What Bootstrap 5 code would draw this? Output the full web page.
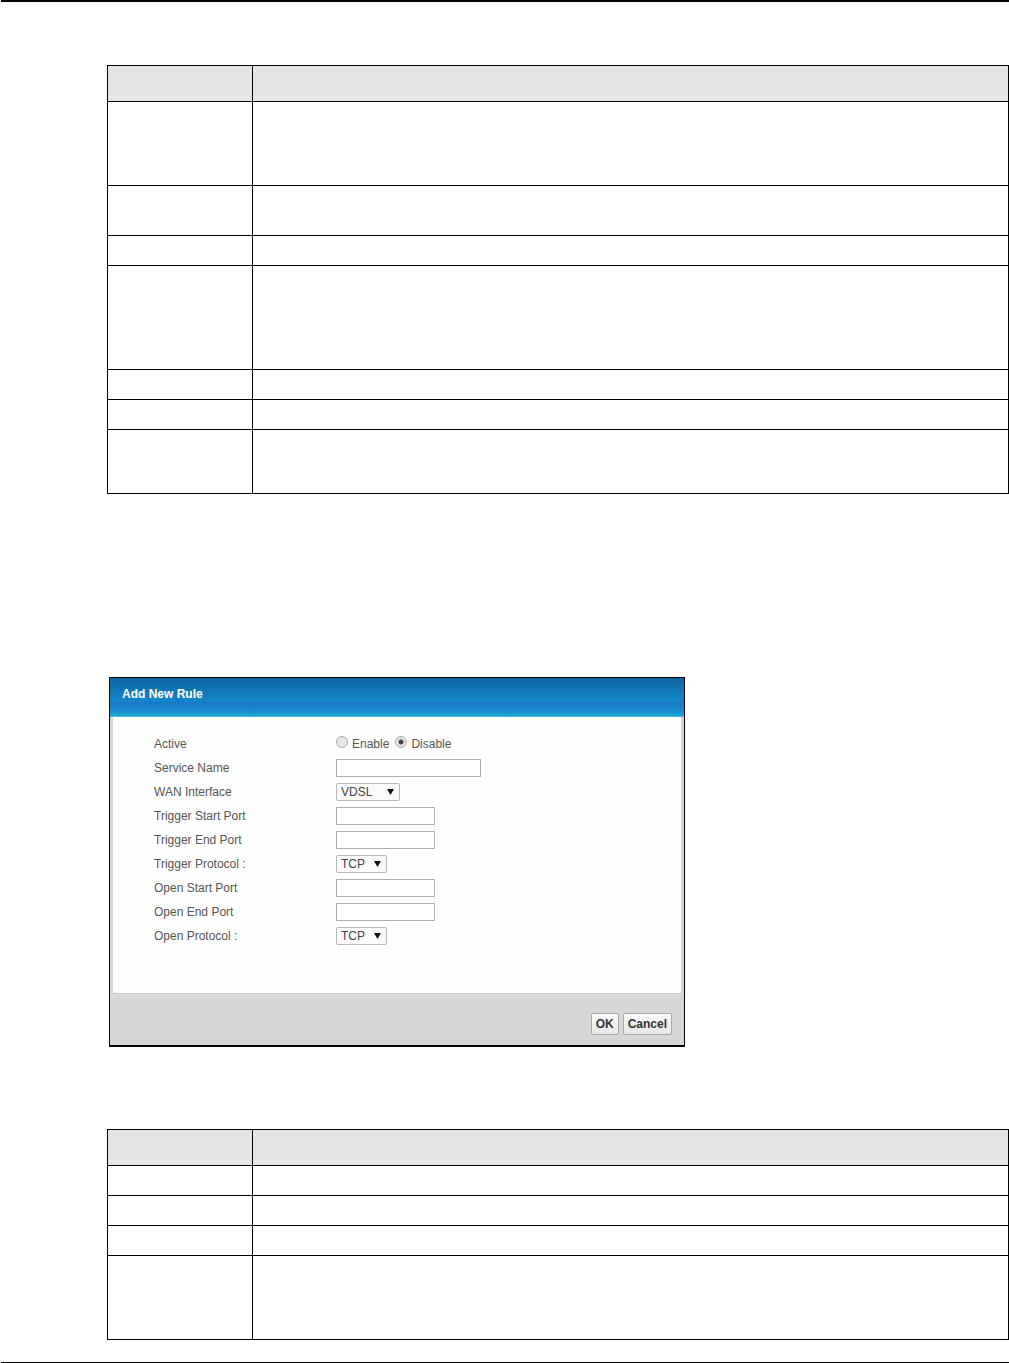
<!DOCTYPE html>
<html lang="en">
<head>
<meta charset="utf-8">
<meta name="viewport" content="width=device-width, initial-scale=1">
<title>Add New Rule</title>
<link href="https://cdn.jsdelivr.net/npm/bootstrap@5.3.0/dist/css/bootstrap.min.css" rel="stylesheet">
<style>
body { background: #fff; font-family: "Liberation Sans", Arial, sans-serif; font-size: 12px; line-height: 18px; color: #555; }
.sheet { border-top: 2px solid #000; border-bottom: 1px solid #000; padding: 63px 0 22px 106px; margin-left: 1px; }
.grid-table { width: 100%; table-layout: fixed; border-collapse: separate; border-spacing: 0; border-top: 1px solid #000; border-left: 1px solid #000; }
.grid-table th, .grid-table td { border-right: 1px solid #000; border-bottom: 1px solid #000; padding: 0; height: 30px; }
.grid-table th { background: #e5e5e5; height: 36px; }
.col-name { width: 145px; }
.grid-table .h-two td { height: 50px; }
.grid-table .h-three td { height: 64px; }
.grid-table .h-four td { height: 84px; }
.grid-table .h-five td { height: 104px; }
.rule-dialog { max-width: 576px; margin: 183px 0 82px 2px; border: 1px solid #000; border-bottom-width: 2px; background: #d6d6d6; }
.rule-head { height: 39px; padding: 0 12px; color: #fff; background: linear-gradient(#0f639e 0, #1287cb 23px, #1a78c8 24px, #1886ce 31px, #1ba6d8 38px, #7cc9e0 39px); }
.rule-head h1 { font-size: 12px; line-height: 33px; font-weight: 700; margin: 0; }
.rule-body { margin: 0 3px; padding: 15px 40px 45px 41px; background: #fefefe; border-bottom: 1px solid #ccc; }
.rule-row { height: 24px; }
.rule-row > .row-title { width: 182px; flex-shrink: 0; }
.rule-row .form-control { width: 99px; height: 18px; min-height: 0; padding: 0 4px; border: 1px solid #b0b0b0; border-radius: 0; font-size: 12px; line-height: 16px; }
.rule-row .form-control.name-box { width: 145px; }
.rule-row select { height: 18px; width: 51px; padding: 0 4px; border: 1px solid #b8b8b8; border-radius: 2px; background: #fafafa; color: #444; font-size: 12px; line-height: 16px; appearance: none; }
.rule-row .wan-box select { width: 64px; }
.pick { position: relative; }
.pick svg { position: absolute; right: 6px; top: 6px; pointer-events: none; }
.dot { appearance: none; flex-shrink: 0; width: 12px; height: 12px; margin: 0 4px 4px 0; border: 1px solid #aaa; border-radius: 50%; background: #e8e8e8; }
.dot:checked { background: radial-gradient(circle, #444 0, #444 2px, #e4e4e4 3px); }
.dot-next { margin-left: 6px; }
.rule-foot { height: 51px; padding: 15px 12px 0; border-top: 4px solid #dadada; }
.rule-foot .btn { height: 22px; padding: 0 4px; border: 1px solid #aaa; border-radius: 2px; background: linear-gradient(#fafafa, #e6e6e6); color: #333; font-size: 12px; line-height: 20px; font-weight: 700; }
</style>
<script src="https://cdn.jsdelivr.net/npm/bootstrap@5.3.0/dist/js/bootstrap.bundle.min.js"></script>
</head>
<body>
<main class="sheet">
  <table class="grid-table">
    <colgroup><col class="col-name"><col></colgroup>
    <thead><tr><th></th><th></th></tr></thead>
    <tbody>
      <tr class="h-four"><td></td><td></td></tr>
      <tr class="h-two"><td></td><td></td></tr>
      <tr><td></td><td></td></tr>
      <tr class="h-five"><td></td><td></td></tr>
      <tr><td></td><td></td></tr>
      <tr><td></td><td></td></tr>
      <tr class="h-three"><td></td><td></td></tr>
    </tbody>
  </table>

  <form class="rule-dialog">
    <header class="rule-head"><h1>Add New Rule</h1></header>
    <div class="rule-body">
      <div class="rule-row d-flex align-items-center">
        <span class="row-title">Active</span>
        <input class="dot" type="radio" name="active" id="on"><label for="on">Enable</label>
        <input class="dot dot-next" type="radio" name="active" id="off" checked><label for="off">Disable</label>
      </div>
      <div class="rule-row d-flex align-items-center"><label class="row-title" for="service">Service Name</label><input class="form-control name-box" type="text" id="service"></div>
      <div class="rule-row d-flex align-items-center"><label class="row-title" for="wan">WAN Interface</label>
        <div class="pick wan-box d-flex"><select id="wan"><option>VDSL</option></select><svg width="7" height="6" viewBox="0 0 7 6"><path d="M0 0h7L3.500 6z" fill="#111"/></svg></div></div>
      <div class="rule-row d-flex align-items-center"><label class="row-title" for="tstart">Trigger Start Port</label><input class="form-control" type="text" id="tstart"></div>
      <div class="rule-row d-flex align-items-center"><label class="row-title" for="tend">Trigger End Port</label><input class="form-control" type="text" id="tend"></div>
      <div class="rule-row d-flex align-items-center"><label class="row-title" for="tproto">Trigger Protocol :</label>
        <div class="pick d-flex"><select id="tproto"><option>TCP</option></select><svg width="7" height="6" viewBox="0 0 7 6"><path d="M0 0h7L3.500 6z" fill="#111"/></svg></div></div>
      <div class="rule-row d-flex align-items-center"><label class="row-title" for="ostart">Open Start Port</label><input class="form-control" type="text" id="ostart"></div>
      <div class="rule-row d-flex align-items-center"><label class="row-title" for="oend">Open End Port</label><input class="form-control" type="text" id="oend"></div>
      <div class="rule-row d-flex align-items-center"><label class="row-title" for="oproto">Open Protocol :</label>
        <div class="pick d-flex"><select id="oproto"><option>TCP</option></select><svg width="7" height="6" viewBox="0 0 7 6"><path d="M0 0h7L3.500 6z" fill="#111"/></svg></div></div>
    </div>
    <footer class="rule-foot d-flex justify-content-end gap-1">
      <button class="btn" type="button">OK</button>
      <button class="btn" type="button">Cancel</button>
    </footer>
  </form>

  <table class="grid-table">
    <colgroup><col class="col-name"><col></colgroup>
    <thead><tr><th></th><th></th></tr></thead>
    <tbody>
      <tr><td></td><td></td></tr>
      <tr><td></td><td></td></tr>
      <tr><td></td><td></td></tr>
      <tr class="h-four"><td></td><td></td></tr>
    </tbody>
  </table>
</main>
</body>
</html>
